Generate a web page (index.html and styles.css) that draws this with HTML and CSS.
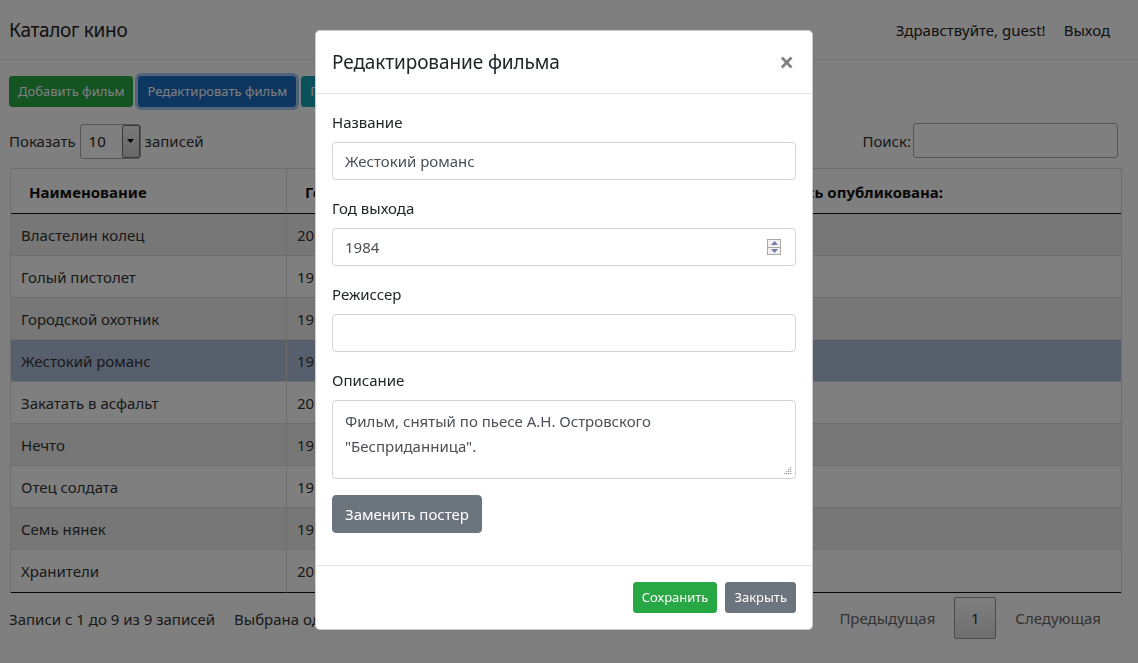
FILE: index.html
```html
<!DOCTYPE html>
<html lang="ru">
<head>
<meta charset="utf-8">
<title>Каталог кино</title>
<link rel="stylesheet" href="styles.css">
</head>
<body>
<nav class="navbar">
  <span class="brand">Каталог кино</span>
  <div class="nav-right">
    <span class="hello">Здравствуйте, guest!</span>
    <a class="logout" href="#">Выход</a>
  </div>
</nav>

<main class="content">
  <div class="toolbar">
    <button class="btn btn-sm btn-success">Добавить фильм</button>
    <button class="btn btn-sm btn-primary active">Редактировать фильм</button>
    <button class="btn btn-sm btn-info">Подробнее о фильме</button>
  </div>

  <div class="dt-top">
    <div class="dt-length">
      <span>Показать</span>
      <div class="fake-select"><span class="sel-val">10</span><span class="sel-btn"><svg width="7" height="4" viewBox="0 0 7 4"><path d="M0 0h7L3.5 4z" fill="#000"/></svg></span></div>
      <span>записей</span>
    </div>
    <div class="dt-filter">
      <span>Поиск:</span>
      <div class="search-box"></div>
    </div>
  </div>

  <table class="dt">
    <thead>
      <tr><th class="c1">Наименование</th><th class="c2">Год выпуска</th><th class="c3">Запись опубликована:</th></tr>
    </thead>
    <tbody>
      <tr class="odd"><td>Властелин колец</td><td>2001</td><td></td></tr>
      <tr><td>Голый пистолет</td><td>1988</td><td></td></tr>
      <tr class="odd"><td>Городской охотник</td><td>1993</td><td></td></tr>
      <tr class="selected"><td>Жестокий романс</td><td>1984</td><td></td></tr>
      <tr><td>Закатать в асфальт</td><td>2018</td><td></td></tr>
      <tr class="odd"><td>Нечто</td><td>1982</td><td></td></tr>
      <tr><td>Отец солдата</td><td>1964</td><td></td></tr>
      <tr class="odd"><td>Семь нянек</td><td>1962</td><td></td></tr>
      <tr class="last"><td>Хранители</td><td>2009</td><td></td></tr>
    </tbody>
  </table>

  <div class="dt-bottom">
    <div class="dt-info">Записи с 1 до 9 из 9 записей <span class="sel-info">Выбрана одна запись</span></div>
    <div class="dt-paginate">
      <span class="pg">Предыдущая</span>
      <span class="pg current">1</span>
      <span class="pg">Следующая</span>
    </div>
  </div>
</main>

<div class="backdrop"></div>

<div class="modal">
  <div class="modal-header">
    <h5 class="modal-title">Редактирование фильма</h5>
    <span class="close">×</span>
  </div>
  <div class="modal-body">
    <div class="form-group">
      <label>Название</label>
      <div class="form-control">Жестокий романс</div>
    </div>
    <div class="form-group">
      <label>Год выхода</label>
      <div class="form-control number">
        <span>1984</span>
        <span class="spinner">
          <span class="spin"><svg width="7" height="4" viewBox="0 0 7 4"><path d="M0 4L3.5 0 7 4z" fill="#6f7fa8"/></svg></span>
          <span class="spin"><svg width="7" height="4" viewBox="0 0 7 4"><path d="M0 0h7L3.5 4z" fill="#6f7fa8"/></svg></span>
        </span>
      </div>
    </div>
    <div class="form-group">
      <label>Режиссер</label>
      <div class="form-control"></div>
    </div>
    <div class="form-group">
      <label>Описание</label>
      <div class="form-control textarea">Фильм, снятый по пьесе А.Н. Островского<br>"Бесприданница".
        <svg class="grip" width="8" height="8" viewBox="0 0 8 8"><g fill="#9a9a9a"><rect x="6" y="0" width="1.2" height="1.2"/><rect x="4" y="2" width="1.2" height="1.2"/><rect x="6" y="2" width="1.2" height="1.2"/><rect x="2" y="4" width="1.2" height="1.2"/><rect x="4" y="4" width="1.2" height="1.2"/><rect x="6" y="4" width="1.2" height="1.2"/><rect x="0" y="6" width="1.2" height="1.2"/><rect x="2" y="6" width="1.2" height="1.2"/><rect x="4" y="6" width="1.2" height="1.2"/><rect x="6" y="6" width="1.2" height="1.2"/></g></svg>
      </div>
    </div>
    <div class="form-group">
      <button class="btn btn-secondary">Заменить постер</button>
    </div>
  </div>
  <div class="modal-footer">
    <button class="btn btn-sm btn-success">Сохранить</button>
    <button class="btn btn-sm btn-secondary">Закрыть</button>
  </div>
</div>
</body>
</html>
```

FILE: styles.css
```css
* { box-sizing: border-box; }

body {
  margin: 0;
  font-family: "Noto Sans", "Open Sans", sans-serif;
  color: #212529;
  background: #fff;
  font-size: 15px;
}

.navbar {
  height: 60px;
  display: flex;
  justify-content: space-between;
  align-items: center;
  padding: 0 28px 0 9px;
  border-bottom: 1px solid #e6e6e6;
  background: #fff;
}
.brand { font-size: 19px; color: #222; letter-spacing: -0.3px; }
.nav-right { display: flex; gap: 18px; font-size: 15px; }
.hello { color: #222; }
.logout { color: #222; text-decoration: none; }

.content { padding: 0 16px 0 9px; }

.toolbar { display: flex; gap: 5px; margin-top: 16px; }

.btn {
  font-family: inherit;
  border: 1px solid transparent;
  border-radius: 4px;
  color: #fff;
  font-size: 15px;
  line-height: 24px;
  padding: 6px 12px;
  cursor: pointer;
}
.btn-sm { font-size: 13px; line-height: 21px; padding: 4px 8px; border-radius: 3px; }
.btn-success { background: #28a745; border-color: #28a745; }
.btn-primary { background: #1a6cc0; border-color: #1a6cc0; }
.btn-primary.active { box-shadow: 0 0 0 3px rgba(90, 160, 240, 0.55); }
.btn-info { background: #17a2b8; border-color: #17a2b8; }
.btn-secondary { background: #6c757d; border-color: #6c757d; }

.dt-top {
  display: flex;
  justify-content: space-between;
  align-items: center;
  margin-top: 16px;
  margin-right: 4px;
  height: 35px;
  color: #333;
}
.dt-length { display: flex; align-items: center; gap: 4px; }
.fake-select {
  display: flex;
  width: 61px;
  height: 35px;
  border: 1px solid #aaa;
  border-radius: 3px;
  background: #fff;
  margin-top: 1px;
}
.sel-val { flex: 1; padding-left: 8px; line-height: 33px; font-size: 15px; color: #222; }
.sel-btn {
  width: 18px;
  border: 1px solid #707070;
  border-radius: 2px;
  background: linear-gradient(#f2f2f2, #cfcfcf);
  display: flex;
  align-items: center;
  justify-content: center;
}
.dt-filter { display: flex; align-items: center; gap: 2px; }
.search-box {
  width: 205px;
  height: 35px;
  border: 1px solid #aaa;
  border-radius: 3px;
  background: #fff;
}

.dt {
  margin: 10px 0 0 1px;
  width: 1112px;
  border-collapse: separate;
  border-spacing: 0;
  border: 1px solid #ddd;
  border-bottom: none;
  table-layout: fixed;
  font-size: 15px;
}
.dt th {
  text-align: left;
  font-weight: bold;
  color: #111;
  padding: 11px 18px 9px;
  line-height: 24px;
  border-bottom: 1px solid #111;
  border-right: 1px solid #ddd;
}
.dt th:last-child, .dt td:last-child { border-right: none; }
.dt .c1 { width: 276px; }
.dt .c2 { width: 464px; }
.dt td {
  padding: 9px 10px 8px;
  line-height: 24px;
  border-bottom: 1px solid #ddd;
  border-right: 1px solid #ddd;
  color: #333;
  white-space: nowrap;
  overflow: hidden;
}
.dt tr.odd td { background: #eeeeee; }
.dt tr.selected td { background: #b0bed9; }
.dt tr.last td { border-bottom: 1px solid #111; padding-bottom: 9px; }

.dt-bottom {
  display: flex;
  justify-content: space-between;
  align-items: center;
  height: 42px;
  margin-top: 4px;
  margin-right: 4px;
  color: #333;
}
.dt-info { padding-top: 2px; }
.sel-info { margin-left: 15px; }
.dt-paginate { display: flex; align-items: center; gap: 2px; }
.pg { padding: 0 17px; line-height: 42px; color: #666; }
.pg.current {
  width: 42px;
  padding: 0;
  text-align: center;
  line-height: 40px;
  color: #333;
  border: 1px solid #979797;
  border-radius: 2px;
  background: linear-gradient(#fff, #dcdcdc);
}

.backdrop {
  position: fixed;
  inset: 0;
  background: rgba(0, 0, 0, 0.5);
}

.modal {
  position: absolute;
  top: 30px;
  left: 315px;
  width: 498px;
  background: #fff;
  border: 1px solid rgba(0, 0, 0, 0.2);
  border-radius: 5px;
  font-size: 15px;
  color: #212529;
}
.modal-header {
  display: flex;
  justify-content: space-between;
  align-items: center;
  padding: 16px;
  border-bottom: 1px solid #dee2e6;
}
.modal-title { margin: 0; font-size: 19px; line-height: 30px; font-weight: 400; letter-spacing: -0.1px; }
.close { font-size: 26px; font-weight: 700; color: #000; opacity: 0.5; line-height: 30px; margin-right: 2px; }
.modal-body { padding: 16px 16px 16px; }
.form-group { margin-bottom: 16px; }
.form-group label { display: block; margin-bottom: 8px; line-height: 24px; padding-top: 1px; margin-top: -1px; }
.form-control {
  height: 38px;
  border: 1px solid #ced4da;
  border-radius: 4px;
  padding: 6px 12px;
  line-height: 24px;
  color: #495057;
}
.form-control.number { display: flex; justify-content: space-between; align-items: center; padding-right: 14px; }
.spinner { display: flex; flex-direction: column; border: 1px solid #a9a9a9; width: 14px; height: 16px; }
.spin { flex: 1; display: flex; align-items: center; justify-content: center; background: #f0f0f0; }
.spin + .spin { border-top: 1px solid #a9a9a9; }
.form-control.textarea { height: 79px; line-height: 25px; padding: 8px 12px; position: relative; }
.grip { position: absolute; right: 3px; bottom: 3px; }

.modal-footer {
  display: flex;
  justify-content: flex-end;
  gap: 8px;
  padding: 16px;
  border-top: 1px solid #dee2e6;
}
```
